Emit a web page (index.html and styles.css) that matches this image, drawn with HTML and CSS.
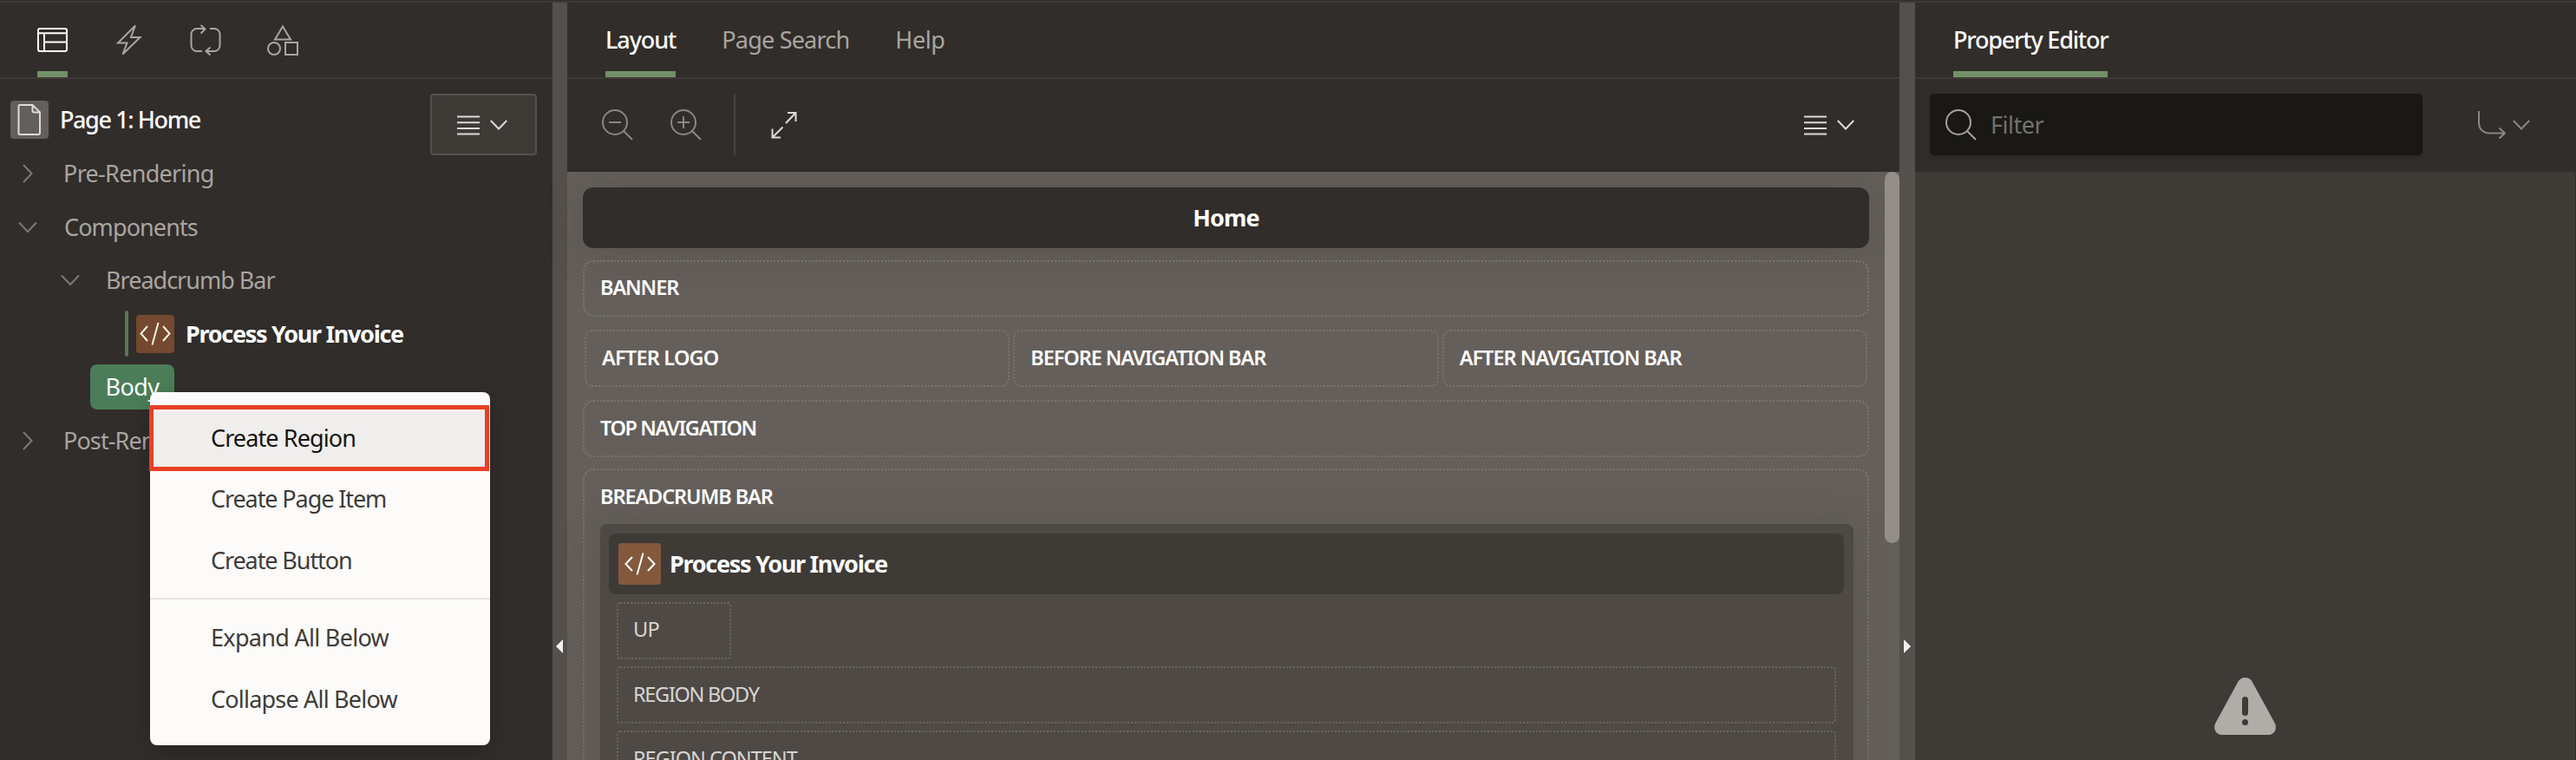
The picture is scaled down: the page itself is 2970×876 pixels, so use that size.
FILE: index.html
```html
<!DOCTYPE html>
<html lang="en">
<head>
<meta charset="utf-8">
<title>Page Designer</title>
<link rel="stylesheet" href="styles.css">
</head>
<body>
<div class="app">
  <section class="pane tree-pane">
    <nav class="tabs icon-tabs">
      <span class="tab active"><svg width="35" height="36" viewBox="0 0 35 36"><rect x="1" y="5" width="33" height="26" rx="2"/><path d="M1 10.300h33M8 10.300V31M8 20.500h26"/></svg></span>
      <span class="tab"><svg width="35" height="36" viewBox="0 0 35 36"><path d="M25 1.500 5 21.500h10.500L10.500 34.500 30.500 15H20z"/></svg></span>
      <span class="tab"><svg width="36" height="36" viewBox="0 0 36 36"><path d="M14 31H8a6.500 6.500 0 0 1-6.500-6.500v-13A6.500 6.500 0 0 1 8 5h9M12.500 1l5 4.500-5 5M23 5h5a6.500 6.500 0 0 1 6.500 6.500v13A6.500 6.500 0 0 1 28 31h-9M23.500 26.500l-5 4.500 5 4.500"/></svg></span>
      <span class="tab"><svg width="36" height="36" viewBox="0 0 36 36"><path d="M18 2.500 27 17.500H9z"/><circle cx="8" cy="28" r="7"/><rect x="21" y="21" width="14" height="14"/></svg></span>
    </nav>
    <div class="tree">
      <button class="menu-button boxed">
        <svg width="26" height="26" viewBox="0 0 26 26"><path d="M0 3.500h26M0 10.200h26M0 16.900h26M0 23.600h26"/></svg>
        <svg width="20" height="14" viewBox="0 0 20 14"><path d="M.8 2 10 11.500 19.200 2"/></svg>
      </button>
      <div class="row page">
        <span class="badge gray"><svg width="28" height="38" viewBox="0 0 28 38"><path d="M3 2h14.500L26 10.500V34a2 2 0 0 1-2 2H3a1.500 1.500 0 0 1-1.500-1.500v-31A1.500 1.500 0 0 1 3 2zM17.500 2v6.500a2 2 0 0 0 2 2H26"/></svg></span>
        <span class="ls14 strong">Page 1: Home</span>
      </div>
      <div class="row d1"><svg class="right" width="14" height="22" viewBox="0 0 14 22"><path d="M2 1l9.500 10L2 21"/></svg><span class="ls7">Pre-Rendering</span></div>
      <div class="row d1"><svg width="22" height="22" viewBox="0 0 22 22"><path d="M1 5.500 11 16 21 5.500"/></svg><span class="ls9">Components</span></div>
      <div class="row d2"><svg width="22" height="22" viewBox="0 0 22 22"><path d="M1 5.500 11 16 21 5.500"/></svg><span class="ls10">Breadcrumb Bar</span></div>
      <div class="row d3">
        <i class="mark"></i>
        <span class="badge brown"><svg width="36" height="28" viewBox="0 0 36 28"><path d="M9 5 1.500 13.500 9 22M27 5l7.500 8.500L27 22M21.500 1 14.500 26.500"/></svg></span>
        <span class="ls13 bold">Process Your Invoice</span>
      </div>
      <div class="row d4"><span class="selected ls6">Body</span></div>
      <div class="row d1"><svg class="right" width="14" height="22" viewBox="0 0 14 22"><path d="M2 1l9.500 10L2 21"/></svg><span class="ls9">Post-Rendering</span></div>
    </div>
  </section>

  <div class="splitter"><svg width="8" height="16" viewBox="0 0 8 16"><path d="M8 0v16L0 8z"/></svg></div>

  <section class="pane center-pane">
    <nav class="tabs text-tabs">
      <span class="tab active ls11">Layout</span>
      <span class="tab ls8">Page Search</span>
      <span class="tab ls4">Help</span>
    </nav>
    <div class="toolbar">
      <svg class="dim" width="36" height="36" viewBox="0 0 36 36"><circle cx="15" cy="15" r="14"/><path d="M25 25l10 10M8 15h14"/></svg>
      <svg class="dim" width="36" height="36" viewBox="0 0 36 36"><circle cx="15" cy="15" r="14"/><path d="M25 25l10 10M8 15h14M15 8v14"/></svg>
      <i class="divider"></i>
      <svg class="expand" width="30" height="32" viewBox="0 0 30 32"><path d="M19 2h9.500v10M28 2.500 17 14M11 30.500H1.500v-10M2 30l11.500-11.500"/></svg>
      <div class="menu-button">
        <svg width="26" height="26" viewBox="0 0 26 26"><path d="M0 3.500h26M0 10.200h26M0 16.900h26M0 23.600h26"/></svg>
        <svg width="20" height="14" viewBox="0 0 20 14"><path d="M.8 2 10 11.500 19.200 2"/></svg>
      </div>
    </div>
    <div class="canvas">
      <div class="regions">
        <header class="home ls9">Home</header>
        <div class="slot banner"><span class="ls11">BANNER</span></div>
        <div class="slots">
          <div class="slot"><span class="ls8">AFTER LOGO</span></div>
          <div class="slot"><span class="ls11">BEFORE NAVIGATION BAR</span></div>
          <div class="slot"><span class="ls10">AFTER NAVIGATION BAR</span></div>
        </div>
        <div class="slot"><span class="ls14">TOP NAVIGATION</span></div>
        <div class="slot open">
          <span class="ls11">BREADCRUMB BAR</span>
          <div class="region">
            <div class="region-head">
              <span class="badge tan"><svg width="36" height="28" viewBox="0 0 36 28"><path d="M9 6 1.500 14 9 22M27 6l7.500 8L27 22M21.500 1.500 14.500 26.500"/></svg></span>
              <span class="ls13">Process Your Invoice</span>
            </div>
            <div class="sub up"><span class="ls6">UP</span></div>
            <div class="sub"><span class="ls13">REGION BODY</span></div>
            <div class="sub"><span class="ls10">REGION CONTENT</span></div>
          </div>
        </div>
      </div>
      <div class="scroll"><i class="thumb"></i></div>
    </div>
  </section>

  <div class="splitter wide"><svg width="8" height="16" viewBox="0 0 8 16"><path d="M0 0v16l8-8z"/></svg></div>

  <section class="pane editor-pane">
    <nav class="tabs text-tabs"><span class="tab active ls12">Property Editor</span></nav>
    <div class="toolbar">
      <div class="filter">
        <svg width="36" height="36" viewBox="0 0 36 36"><circle cx="15" cy="15" r="14"/><path d="M25 25l10 10"/></svg>
        <span class="ls5">Filter</span>
      </div>
      <div class="goto">
        <svg width="33" height="34" viewBox="0 0 33 34"><path d="M2 1v14a11.500 11.500 0 0 0 11.500 11.500H31M25.500 20.500l6.500 6-6.500 6"/></svg>
        <svg width="20" height="14" viewBox="0 0 20 14"><path d="M.8 2 10 11.500 19.200 2"/></svg>
      </div>
    </div>
    <div class="empty">
      <svg width="72" height="66" viewBox="0 0 72 66"><path d="M27.500 4.500C29.500 1.500 32 0 35.500 0s6.500 1.500 8 4.500l26.300 48C73 59 69 66 62 66H9.500C2 66-2 59 1.300 52.500z"/><rect class="cut" x="32" y="22" width="7" height="22" rx="3.500"/><circle class="cut" cx="35.500" cy="51.500" r="3.500"/></svg>
    </div>
  </section>
</div>

<div class="menu">
  <div class="item current"><span class="ls9">Create Region</span></div>
  <div class="item"><span class="ls11">Create Page Item</span></div>
  <div class="item"><span class="ls11">Create Button</span></div>
  <hr>
  <div class="item"><span class="ls7">Expand All Below</span></div>
  <div class="item"><span class="ls8">Collapse All Below</span></div>
</div>
</body>
</html>
```
FILE: styles.css
```css
*,*::after{box-sizing:border-box}
body{margin:0;height:876px;padding-top:1px;background:#312d2a;color:#a9a5a1;font:400 27px/36px "Noto Sans","Open Sans",sans-serif;overflow:hidden;white-space:nowrap}
svg{display:block;fill:none;stroke:currentColor;stroke-width:2;flex:none}
.ls4{letter-spacing:-.4px}
.ls5{letter-spacing:-.5px}
.ls6{letter-spacing:-.6px}
.ls7{letter-spacing:-.7px}
.ls8{letter-spacing:-.8px}
.ls9{letter-spacing:-.9px}
.ls10{letter-spacing:-1px}
.ls11{letter-spacing:-1.1px}
.ls12{letter-spacing:-1.2px}
.ls13{letter-spacing:-1.3px}
.ls14{letter-spacing:-1.4px}

.app{display:flex;height:875px;border-top:2px solid #3e3a37;overflow:hidden}
.pane{display:flex;flex-direction:column;min-width:0}
.tree-pane{width:637px}
.center-pane{width:1536px}
.editor-pane{width:762px;background:#3e3a36;border-right:1px solid #312d2a}
.splitter{width:17px;background:#55504b;color:#f5f3f0;padding:734px 0 0 4px;flex:none}
.splitter.wide{width:18px;padding-left:5px}
.splitter path{fill:currentColor;stroke:none}

.tabs{display:flex;height:88px;border-bottom:2px solid #3e3a37;background:#312d2a;flex:none}
.tab{height:86px;border-bottom:7px solid transparent}
.tab.active{color:#fff;font-weight:500;border-color:#749069}
.icon-tabs{gap:53px;padding-left:43px}
.icon-tabs .tab{padding-top:25px}
.text-tabs{gap:53px;padding-left:44px}
.text-tabs .tab{padding-top:25px}

.tree{position:relative;padding-top:16.700px}
.row{display:flex;align-items:center;height:61.600px}
.row>svg{color:#7d7873;margin-right:32px}
.row>svg.right{margin:0 35px 0 4px}
.page{padding-left:12px}
.strong{color:#fff;font-weight:500}
.bold{color:#fff;font-weight:700}
.d1{padding-left:21px}
.d1>span{margin-left:-1px}
.d2{padding-left:70px}
.d2>span{margin-left:-2px}
.d3{padding-left:144px}
.d4{padding-left:104px}
.mark{width:4px;height:53px;border-radius:2px;background:#5d7354;margin-right:9px}
.badge{display:flex;align-items:center;justify-content:center;width:44px;height:44px;border-radius:4px;margin-right:13px;flex:none}
.gray{background:#655f5b;color:#dedbd8}
.brown{background:#74492f;color:#fdf3e2}
.selected{display:flex;align-items:center;height:52px;width:97px;padding-left:17.500px;border-radius:8px;background:#4b7d58;color:#fff}
.menu-button{display:flex;align-items:center;gap:12px;color:#dedbd8;padding:0}
.boxed{position:absolute;left:496px;top:17px;width:123px;height:71px;background:#3e3a36;border:2px solid #55504b;border-radius:4px;padding-left:29px}

.toolbar{display:flex;align-items:center;height:107px;background:#312d2a;flex:none}
.center-pane .toolbar{padding:0 52px 2px 40px}
.dim{color:#8b8681}
.dim+.dim{margin-left:43px}
.divider{width:2px;height:71px;background:#46423e;margin-left:37px}
.expand{color:#dedbd8;margin-left:41px}
.center-pane .menu-button{margin-left:auto}

.canvas{display:flex;flex:1;min-height:0;background:#655f5b}
.regions{flex:1;display:flex;flex-direction:column;padding:18px 18px 0}
.home{height:70px;border-radius:12px;background:#312d2a;color:#fff;font-weight:700;text-align:center;line-height:69px;box-shadow:0 6px 50px rgba(30,30,10,.16);margin-bottom:14px;flex:none}
.slot{height:65px;border:2px dotted #7b7570;border-radius:12px;padding:12px 18px;color:#fff;font-size:23.500px;font-weight:600;flex:none}
.slot>span{display:block}
.banner{padding-top:11px}
.slots{display:flex;gap:4px;padding:0 2px;margin:15px 0 15px}
.slots .slot{flex:1;height:66px;border-radius:9px}
.open{height:400px;margin-top:13px}
.slots+.slot{height:66px}
.region{margin-top:14px;height:400px;background:#4e4945;border-radius:8px;padding:11px 11px;box-shadow:0 6px 50px rgba(30,30,10,.16);margin-right:-2px}
.region-head{display:flex;align-items:center;height:70px;border-radius:8px;background:#3e3a36;padding:0 11px;margin-bottom:9px;font-size:27px;font-weight:700;margin-left:-1px}
.tan{width:49px;height:48px;background:#83593d;margin-right:10px}
.sub{height:66px;border:2px dotted #6b6561;border-radius:4px;padding:12px 17px;margin:0 9px 8px 8px;color:#d8d5d1;font-weight:400}
.up{width:132px;padding-top:11px}
.scroll{width:17px}
.thumb{display:block;height:428px;border-radius:9px;background:#938e8a}

.editor-pane .toolbar{padding:0 52px 2px 17px}
.filter{display:flex;align-items:center;width:568px;height:71px;border-radius:5px;background:#191815;color:#a6a29e;padding-left:18px;box-shadow:0 2px 4px rgba(0,0,0,.15)}
.filter span{color:#75716c;margin-left:16px}
.goto{display:flex;align-items:center;gap:8px;color:#8b8681;margin-left:auto}
.empty{display:flex;justify-content:center;padding:583px 0 0;flex:1}
.empty path{fill:#afada8;stroke:none}
.empty .cut{fill:#3e3a36;stroke:none}

.menu{position:absolute;left:173px;top:452px;width:392px;height:407px;padding-top:17.500px;background:#fcfbfa;border-radius:8px;color:#403c38;box-shadow:0 8px 24px rgba(0,0,0,.2)}
.item{height:70.500px;line-height:70px;padding-left:70px}
.current{position:relative;color:#161513;background:#f0eeed}
.current::after{content:"";position:absolute;left:-1px;top:-2.500px;width:392px;height:76px;border:5px solid #ea3f26;background:transparent}
.menu hr{height:2px;border:0;margin:8px 0 9px;background:#e4e1dd}
```
